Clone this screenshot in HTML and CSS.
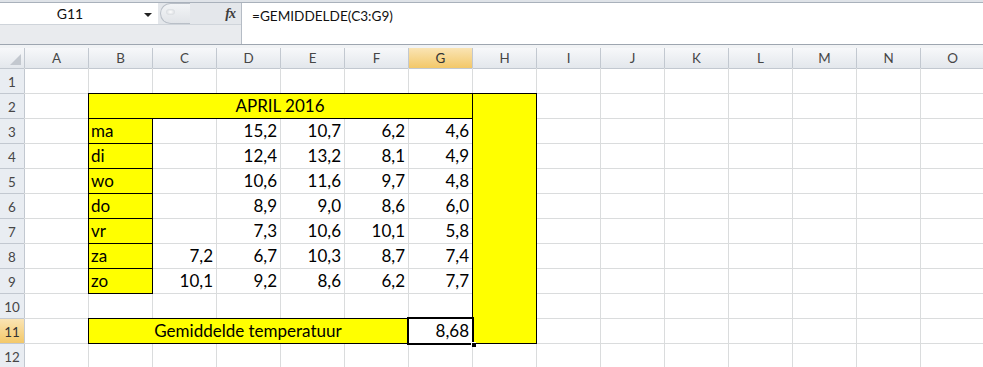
FILE: index.html
```html
<!DOCTYPE html>
<html>
<head>
    <title>Temperatuur april 2016</title>
    <link rel="stylesheet" href="styles.css">
</head>
<body>
    <div class="top-strip"></div>
    <div class="formula-bar">
        <div class="fb-left">
            <div class="fb-row">
                <div class="name-box">G11<span class="arrow"></span></div>
                <div class="fx-area">
                    <span class="grip"><span class="dot"></span></span>
                    <span class="fx">fx</span>
                </div>
            </div>
            <div class="fb-under"></div>
        </div>
        <div class="formula">=GEMIDDELDE(C3:G9)</div>
    </div>
    <div class="bar-gap"></div>

    <div class="sheet">
        <!-- column headers -->
        <div class="hd corner"><span class="tri"></span></div>
        <div class="hd">A</div><div class="hd">B</div><div class="hd">C</div><div class="hd">D</div><div class="hd">E</div>
        <div class="hd">F</div><div class="hd sel">G</div><div class="hd">H</div><div class="hd">I</div><div class="hd">J</div>
        <div class="hd">K</div><div class="hd">L</div><div class="hd">M</div><div class="hd">N</div><div class="hd">O</div>

        <!-- row 1 -->
        <div class="rh">1</div>
        <div></div><div></div><div></div><div></div><div></div><div></div><div></div><div></div>
        <div></div><div></div><div></div><div></div><div></div><div></div><div></div>

        <!-- row 2 -->
        <div class="rh">2</div>
        <div></div>
        <div class="y ctr title">APRIL 2016</div>
        <div class="y side"></div>
        <div></div><div></div><div></div><div></div><div></div><div></div><div></div>

        <!-- row 3 -->
        <div class="rh">3</div>
        <div></div><div class="y">ma</div><div class="num"></div><div class="num">15,2</div><div class="num">10,7</div><div class="num">6,2</div><div class="num">4,6</div>
        <div></div><div></div><div></div><div></div><div></div><div></div><div></div>

        <!-- row 4 -->
        <div class="rh">4</div>
        <div></div><div class="y">di</div><div class="num"></div><div class="num">12,4</div><div class="num">13,2</div><div class="num">8,1</div><div class="num">4,9</div>
        <div></div><div></div><div></div><div></div><div></div><div></div><div></div>

        <!-- row 5 -->
        <div class="rh">5</div>
        <div></div><div class="y">wo</div><div class="num"></div><div class="num">10,6</div><div class="num">11,6</div><div class="num">9,7</div><div class="num">4,8</div>
        <div></div><div></div><div></div><div></div><div></div><div></div><div></div>

        <!-- row 6 -->
        <div class="rh">6</div>
        <div></div><div class="y">do</div><div class="num"></div><div class="num">8,9</div><div class="num">9,0</div><div class="num">8,6</div><div class="num">6,0</div>
        <div></div><div></div><div></div><div></div><div></div><div></div><div></div>

        <!-- row 7 -->
        <div class="rh">7</div>
        <div></div><div class="y">vr</div><div class="num"></div><div class="num">7,3</div><div class="num">10,6</div><div class="num">10,1</div><div class="num">5,8</div>
        <div></div><div></div><div></div><div></div><div></div><div></div><div></div>

        <!-- row 8 -->
        <div class="rh">8</div>
        <div></div><div class="y">za</div><div class="num">7,2</div><div class="num">6,7</div><div class="num">10,3</div><div class="num">8,7</div><div class="num">7,4</div>
        <div></div><div></div><div></div><div></div><div></div><div></div><div></div>

        <!-- row 9 -->
        <div class="rh">9</div>
        <div></div><div class="y">zo</div><div class="num">10,1</div><div class="num">9,2</div><div class="num">8,6</div><div class="num">6,2</div><div class="num">7,7</div>
        <div></div><div></div><div></div><div></div><div></div><div></div><div></div>

        <!-- row 10 -->
        <div class="rh">10</div>
        <div></div><div></div><div></div><div></div><div></div><div></div><div></div>
        <div></div><div></div><div></div><div></div><div></div><div></div><div></div>

        <!-- row 11 -->
        <div class="rh sel">11</div>
        <div></div>
        <div class="y ctr avg">Gemiddelde temperatuur</div>
        <div class="num active">8,68</div>
        <div></div><div></div><div></div><div></div><div></div><div></div><div></div>

        <!-- row 12 -->
        <div class="rh">12</div>
        <div></div><div></div><div></div><div></div><div></div><div></div><div></div><div></div>
        <div></div><div></div><div></div><div></div><div></div><div></div><div></div>
    </div>
</body>
</html>
```

FILE: styles.css
```css
body {
    margin: 0;
    width: 983px;
    height: 367px;
    overflow: hidden;
    background-color: #fff;
    font-family: Lato, "Liberation Sans", sans-serif;
    color: #000;
}

/* formula bar */
.top-strip {
    height: 2px;
    background-color: #dfe3e8;
    border-bottom: 1px solid #a9b1bb;
}
.formula-bar {
    display: flex;
    height: 41px;
}
.fb-left {
    width: 241px;
    display: flex;
    flex-direction: column;
    border-right: 1px solid #b5bcc5;
}
.fb-row {
    display: flex;
    height: 21px;
}
.name-box {
    width: 158px;
    background-color: #fff;
    position: relative;
    font-size: 14px;
    line-height: 21px;
    text-align: center;
    padding-right: 18px;
    box-sizing: border-box;
    color: #111;
}
.arrow {
    position: absolute;
    right: 6px;
    top: 10px;
    border-left: 4px solid transparent;
    border-right: 4px solid transparent;
    border-top: 4px solid #222;
}
.fx-area {
    flex: 1;
    display: flex;
    align-items: center;
    justify-content: space-between;
    background-color: #e4e7eb;
}
.grip {
    width: 30px;
    height: 21px;
    box-sizing: border-box;
    border: 1px solid #b9bfc7;
    border-right: none;
    border-radius: 11px 0 0 11px;
    margin-left: 2px;
    background: linear-gradient(#f2f4f6, #e1e4e8);
    display: flex;
    padding: 5px 0 0 5px;
}
.dot {
    width: 9px;
    height: 6px;
    border-radius: 50%;
    background: radial-gradient(#ffffff, #c7ccd2);
}
.fx {
    font-family: "Liberation Serif", serif;
    font-style: italic;
    font-weight: bold;
    font-size: 14px;
    color: #3c3c3c;
    margin-right: 6px;
    letter-spacing: -1px;
}
.fb-under {
    flex: 1;
    background-color: #e9ebee;
    border-top: 1px solid #cfd4da;
}
.formula {
    flex: 1;
    background-color: #fff;
    padding: 5px 0 0 10px;
    font-size: 13.6px;
    color: #111;
}
.bar-gap {
    height: 3px;
    border-top: 1px solid #9ea6b0;
    background-color: #f1f3f5;
}

/* worksheet */
.sheet {
    display: grid;
    grid-template-columns: 24px repeat(15, 63px);
    grid-template-rows: 20px repeat(12, 24px);
    gap: 1px;
    background-color: #dadcdd;
}
.sheet > div {
    background-color: #fff;
    display: flex;
    align-items: flex-end;
    padding: 0 3px 2px 2px;
    font-size: 17px;
    line-height: 20px;
    white-space: nowrap;
}
.sheet > .hd,
.sheet > .rh {
    background: linear-gradient(#f7f8fa, #e3e7ec);
    color: #464646;
    font-size: 13.4px;
    line-height: 16px;
    align-items: center;
    justify-content: center;
    padding: 0;
    box-shadow: 1px 0 0 #c2c8d0, 0 1px 0 #c2c8d0;
}
.sheet > .rh {
    background: #e9edf2;
    padding-top: 2px;
}
.sheet > .sel {
    background: linear-gradient(#fae4b4, #f3c869);
    color: #333;
}
.corner {
    position: relative;
}
.tri {
    position: absolute;
    right: 3px;
    bottom: 3px;
    border-left: 11px solid transparent;
    border-bottom: 11px solid #c3c8cf;
}
.sheet > .y {
    background-color: #ffff00;
    box-shadow: 0 0 0 1px #000;
}
.sheet > .num {
    justify-content: flex-end;
}
.sheet > .ctr {
    justify-content: center;
}
.title {
    grid-column: span 6;
}
.side {
    grid-row: span 10;
}
.avg {
    grid-column: span 5;
}
.sheet > .active {
    position: relative;
    box-shadow: 0 0 0 2px #000;
}
.active::after {
    content: "";
    position: absolute;
    right: -4px;
    bottom: -4px;
    width: 4px;
    height: 4px;
    background-color: #000;
    border: 1px solid #fff;
    border-right: none;
    border-bottom: none;
}
```
